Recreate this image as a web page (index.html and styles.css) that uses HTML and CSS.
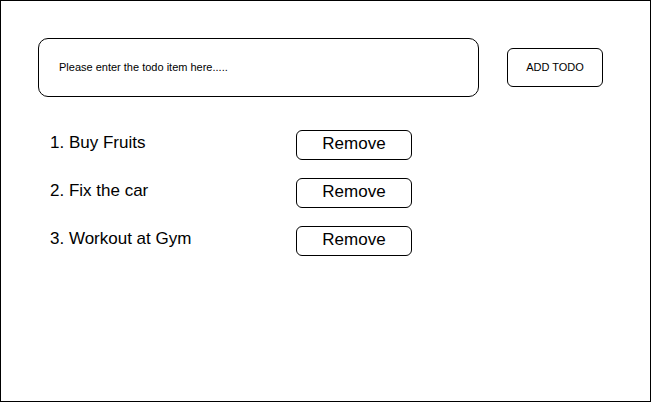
FILE: index.html
```html
<!DOCTYPE html>
<html lang="en">
<head>
<meta charset="utf-8">
<meta name="viewport" content="width=device-width, initial-scale=1">
<title>Todo list</title>
<link rel="stylesheet" href="styles.css">
</head>
<body>
<main class="app">
  <form class="add-form">
    <input class="add-input" type="text" aria-label="Todo item" placeholder="Please enter the todo item here.....">
    <button class="button add-button" type="submit">ADD TODO</button>
  </form>
  <ol class="todo-list">
    <li class="todo"><span class="todo-text">1. Buy Fruits</span><button class="button remove-button" type="button">Remove</button></li>
    <li class="todo"><span class="todo-text">2. Fix the car</span><button class="button remove-button" type="button">Remove</button></li>
    <li class="todo"><span class="todo-text">3. Workout at Gym</span><button class="button remove-button" type="button">Remove</button></li>
  </ol>
</main>
</body>
</html>
```
FILE: styles.css
```css
* {
  box-sizing: border-box;
}

body {
  margin: 0;
  background: #fff;
  color: #000;
  font-family: "Liberation Sans", Arial, sans-serif;
}

.app {
  min-height: 100vh;
  padding: 37px 47px 37px 37px;
  border: 1px solid #000;
}

.add-form {
  display: flex;
  align-items: center;
  gap: 28px;
  font-size: 11px;
}

.add-input {
  flex: 1;
  min-width: 0;
  height: 59px;
  padding: 0 20px 2px;
  border: 1px solid #000;
  border-radius: 10px;
  background: #fff;
  color: #000;
  font: inherit;
}

.add-input::placeholder {
  color: #000;
  opacity: 1;
}

.button {
  padding: 0 0 2px;
  border: 1px solid #000;
  border-radius: 6px;
  background: #fff;
  color: #000;
  font: inherit;
  cursor: pointer;
}

.add-button {
  width: 96px;
  height: 39px;
}

.todo-list {
  display: grid;
  gap: 18px;
  margin: 33px 0 0;
  padding: 0 0 0 12px;
  list-style: none;
  font-size: 17px;
}

.todo {
  display: grid;
  grid-template-columns: 246px 116px;
  align-items: center;
}

.todo-text {
  padding-bottom: 4px;
}

.remove-button {
  height: 30px;
}
```
